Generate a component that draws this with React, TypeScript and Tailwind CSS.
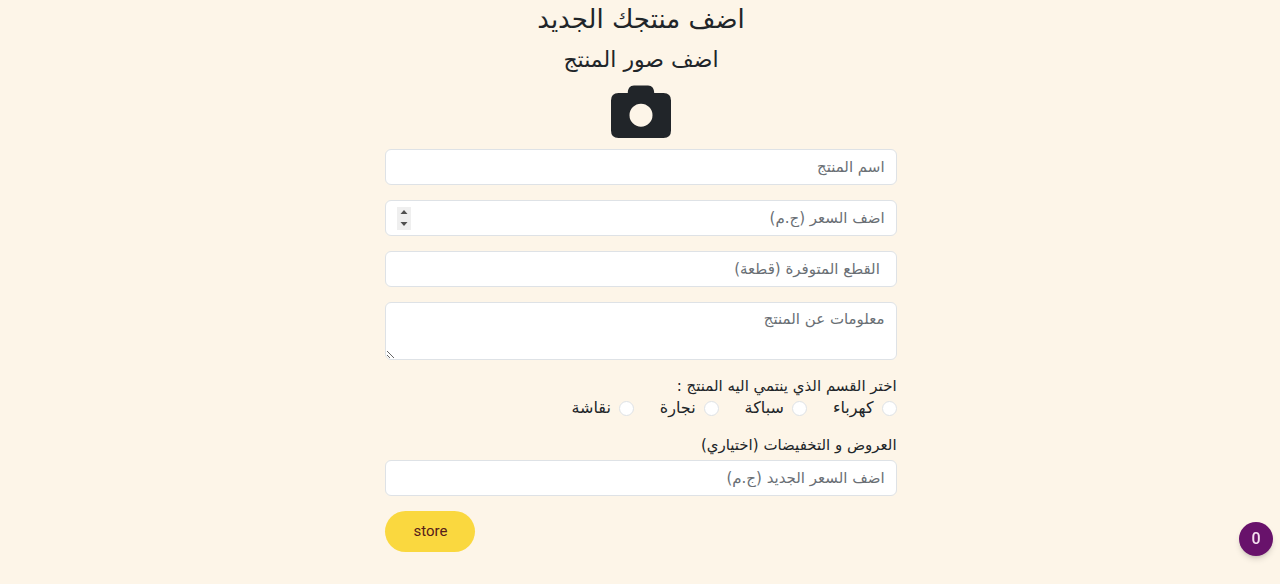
import React, { useRef } from 'react';

const fieldClass =
  'block w-full rounded-md border border-[#dee2e6] bg-white px-[11px] text-[15px] text-[#212529] placeholder:text-[#6a6f75] focus:outline-none focus:ring-2 focus:ring-[#fad83f]';

const categories = [
  { id: 'electricity', label: 'كهرباء' },
  { id: 'plumbing', label: 'سباكة' },
  { id: 'carpentry', label: 'نجارة' },
  { id: 'painting', label: 'نقاشة' },
];

function CameraIcon() {
  return (
    <svg viewBox="0 0 60 53" className="h-[53px] w-[60px]" fill="currentColor" aria-hidden="true">
      <path
        fillRule="evenodd"
        d="M7.5 8H16.8C16.8 3.5 19 0.5 23 0.5H37C41 0.5 43.2 3.5 43.2 8H52.5Q60 8 60 15.5V45.5Q60 53 52.5 53H7.5Q0 53 0 45.5V15.5Q0 8 7.5 8ZM30 18.7A11.5 11.5 0 1 0 30 41.7A11.5 11.5 0 1 0 30 18.7Z"
      />
    </svg>
  );
}

function PriceField() {
  const ref = useRef<HTMLInputElement>(null);
  return (
    <div className="relative">
      <input
        ref={ref}
        type="number"
        aria-label="اضف السعر"
        placeholder="اضف السعر (ج.م)"
        className={`${fieldClass} h-9 [appearance:textfield] [&::-webkit-inner-spin-button]:appearance-none`}
      />
      <div className="absolute inset-y-0 left-3 my-auto flex h-[23px] w-[14px] flex-col bg-[#efefef] text-[#505050]">
        <button type="button" aria-label="زيادة" onClick={() => ref.current?.stepUp()} className="flex flex-1 items-center justify-center">
          <svg viewBox="0 0 8 4" className="h-1 w-2" fill="currentColor" aria-hidden="true">
            <path d="M0.5 4L4 0L7.5 4Z" />
          </svg>
        </button>
        <button type="button" aria-label="نقصان" onClick={() => ref.current?.stepDown()} className="flex flex-1 items-center justify-center">
          <svg viewBox="0 0 8 4" className="h-1 w-2" fill="currentColor" aria-hidden="true">
            <path d="M0.5 0L4 4L7.5 0Z" />
          </svg>
        </button>
      </div>
    </div>
  );
}

export default function App() {
  return (
    <main
      dir="rtl"
      lang="ar"
      className="min-h-screen bg-[#fdf5e8] pb-8 pl-0.5 font-['DejaVu_Sans','Noto_Sans',sans-serif] text-[15px] text-[#212529]"
    >
      <form className="mx-auto w-2/5 min-w-72" onSubmit={(e) => e.preventDefault()}>
        <header className="flex flex-col items-center">
          <h1 className="h-10 text-[26px] leading-[38px]">اضف منتجك الجديد</h1>
          <h2 className="h-[45px] text-[22px] leading-[40px]">اضف صور المنتج</h2>
          <label className="mb-[11px] cursor-pointer">
            <CameraIcon />
            <input type="file" multiple accept="image/*" aria-label="اضف صور المنتج" className="sr-only" />
          </label>
        </header>

        <div className="flex flex-col gap-[15px]">
          <input type="text" aria-label="اسم المنتج" placeholder="اسم المنتج" className={`${fieldClass} h-9`} />
          <PriceField />
          <input type="text" aria-label="القطع المتوفرة" placeholder=" القطع المتوفرة (قطعة)" className={`${fieldClass} h-9`} />
          <textarea aria-label="معلومات عن المنتج" placeholder="معلومات عن المنتج" className={`${fieldClass} h-[58px] resize-y py-[6px] leading-[21px]`} />

          <fieldset>
            <legend className="h-[22px] leading-[22px]">اختر القسم الذي ينتمي اليه المنتج :</legend>
            <div className="flex flex-wrap gap-[26px]">
              {categories.map(({ id, label }) => (
                <label key={id} className="flex h-[22px] items-center gap-2 text-[16px]">
                  <input
                    type="radio"
                    name="category"
                    value={id}
                    className="size-[15px] shrink-0 appearance-none rounded-full border border-[#dee2e6] bg-white checked:border-4 checked:border-[#68126b]"
                  />
                  {label}
                </label>
              ))}
            </div>
          </fieldset>

          <div>
            <label htmlFor="sale-price" className="block h-[26px] leading-[22px]">
              العروض و التخفيضات (اختياري)
            </label>
            <input id="sale-price" type="text" placeholder="اضف السعر الجديد (ج.م)" className={`${fieldClass} h-9`} />
          </div>

          <button type="submit" className="h-[41px] w-[90px] self-end rounded-full bg-[#fad83f] font-[Roboto,sans-serif] text-[15px] text-[#56201a]">
            store
          </button>
        </div>
      </form>

      <button
        type="button"
        dir="ltr"
        className="fixed right-[7px] bottom-7 flex size-[34px] items-center justify-center rounded-full bg-[#68126b] font-[Roboto,sans-serif] text-[16px] font-medium text-[#f5e1f0] shadow-md shadow-black/15"
      >
        0
      </button>
    </main>
  );
}
